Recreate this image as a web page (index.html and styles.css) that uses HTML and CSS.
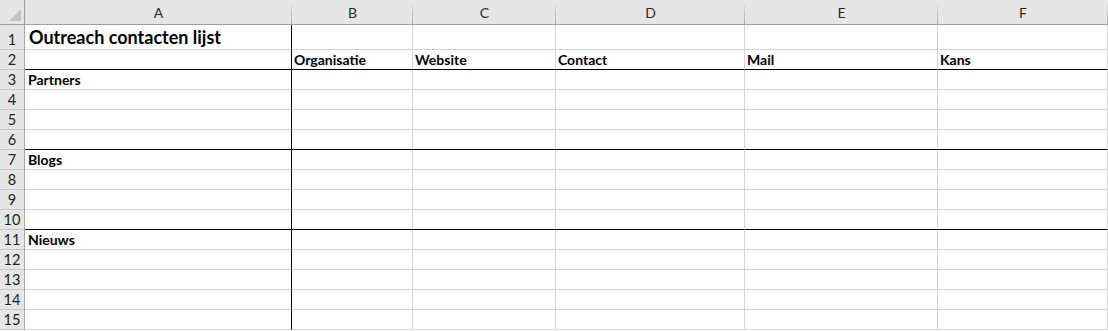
FILE: index.html
```html
<!DOCTYPE html>
<html lang="nl">
<head>
<meta charset="utf-8">
<title>Outreach contacten lijst</title>
<link rel="stylesheet" href="styles.css">
</head>
<body>
<div class="sheet">
  <div class="corner"></div>
  <div class="colhdr">A</div>
  <div class="colhdr">B</div>
  <div class="colhdr">C</div>
  <div class="colhdr">D</div>
  <div class="colhdr">E</div>
  <div class="colhdr">F</div>

  <div class="rowhdr">1</div>
  <div class="cell col-a title">Outreach contacten lijst</div>
  <div class="cell"></div><div class="cell"></div><div class="cell"></div><div class="cell"></div><div class="cell"></div>

  <div class="rowhdr">2</div>
  <div class="cell col-a sep"></div>
  <div class="cell sep b">Organisatie</div>
  <div class="cell sep b">Website</div>
  <div class="cell sep b">Contact</div>
  <div class="cell sep b">Mail</div>
  <div class="cell sep b">Kans</div>

  <div class="rowhdr">3</div>
  <div class="cell col-a b">Partners</div>
  <div class="cell"></div><div class="cell"></div><div class="cell"></div><div class="cell"></div><div class="cell"></div>

  <div class="rowhdr">4</div>
  <div class="cell col-a"></div>
  <div class="cell"></div><div class="cell"></div><div class="cell"></div><div class="cell"></div><div class="cell"></div>

  <div class="rowhdr">5</div>
  <div class="cell col-a"></div>
  <div class="cell"></div><div class="cell"></div><div class="cell"></div><div class="cell"></div><div class="cell"></div>

  <div class="rowhdr">6</div>
  <div class="cell col-a sep"></div>
  <div class="cell sep"></div><div class="cell sep"></div><div class="cell sep"></div><div class="cell sep"></div><div class="cell sep"></div>

  <div class="rowhdr">7</div>
  <div class="cell col-a b">Blogs</div>
  <div class="cell"></div><div class="cell"></div><div class="cell"></div><div class="cell"></div><div class="cell"></div>

  <div class="rowhdr">8</div>
  <div class="cell col-a"></div>
  <div class="cell"></div><div class="cell"></div><div class="cell"></div><div class="cell"></div><div class="cell"></div>

  <div class="rowhdr">9</div>
  <div class="cell col-a"></div>
  <div class="cell"></div><div class="cell"></div><div class="cell"></div><div class="cell"></div><div class="cell"></div>

  <div class="rowhdr">10</div>
  <div class="cell col-a sep"></div>
  <div class="cell sep"></div><div class="cell sep"></div><div class="cell sep"></div><div class="cell sep"></div><div class="cell sep"></div>

  <div class="rowhdr">11</div>
  <div class="cell col-a b">Nieuws</div>
  <div class="cell"></div><div class="cell"></div><div class="cell"></div><div class="cell"></div><div class="cell"></div>

  <div class="rowhdr">12</div>
  <div class="cell col-a"></div>
  <div class="cell"></div><div class="cell"></div><div class="cell"></div><div class="cell"></div><div class="cell"></div>

  <div class="rowhdr">13</div>
  <div class="cell col-a"></div>
  <div class="cell"></div><div class="cell"></div><div class="cell"></div><div class="cell"></div><div class="cell"></div>

  <div class="rowhdr">14</div>
  <div class="cell col-a"></div>
  <div class="cell"></div><div class="cell"></div><div class="cell"></div><div class="cell"></div><div class="cell"></div>

  <div class="rowhdr">15</div>
  <div class="cell col-a"></div>
  <div class="cell"></div><div class="cell"></div><div class="cell"></div><div class="cell"></div><div class="cell"></div>
</div>
</body>
</html>
```
FILE: styles.css
```css
html, body {
  margin: 0;
  padding: 0;
  background: #ffffff;
}

.sheet {
  display: grid;
  grid-template-columns: 25px 267px 121px 143px 189px 193px 170px;
  grid-template-rows: 25px 25px repeat(14, 20px);
  font-family: Lato, "Liberation Sans", sans-serif;
  font-size: 14px;
  color: #000;
}

/* top-left select-all box with its triangle */
.corner {
  position: relative;
  background: #e6e6e6;
  border-right: 1px solid #9f9f9f;
  border-bottom: 1px solid #9f9f9f;
  box-sizing: border-box;
}
.corner::after {
  content: "";
  position: absolute;
  left: 9px;
  top: 9px;
  width: 12px;
  height: 12px;
  background: #c3c3c3;
  clip-path: polygon(100% 0, 100% 100%, 0 100%);
}

/* column letters */
.colhdr {
  position: relative;
  background: #e6e6e6;
  border-bottom: 1px solid #9f9f9f;
  box-sizing: border-box;
  display: flex;
  align-items: center;
  justify-content: center;
  padding-top: 1px;
  color: #2b2b2b;
  font-size: 14px;
}
.colhdr::after {
  content: "";
  position: absolute;
  right: 0;
  top: 5px;
  bottom: 0;
  width: 1px;
  background: linear-gradient(#dcdcdc, #a9a9a9);
}

/* row numbers */
.rowhdr {
  background: #e6e6e6;
  border-right: 1px solid #a8a8a8;
  border-bottom: 1px solid #c8c8c8;
  box-sizing: border-box;
  display: flex;
  align-items: flex-end;
  justify-content: center;
  padding-bottom: 1px;
  color: #222;
  font-size: 14.5px;
  line-height: 17px;
}

/* worksheet cells, text sits on the bottom edge */
.cell {
  border-right: 1px solid #d4d4d4;
  border-bottom: 1px solid #d4d4d4;
  box-sizing: border-box;
  display: flex;
  align-items: flex-end;
  padding: 0 2px 1px 2px;
  white-space: nowrap;
  overflow: hidden;
  line-height: 17px;
}

.col-a {
  border-right-color: #000;
}

.sep {
  border-bottom-color: #000;
}

.b {
  font-weight: 700;
}

.col-a.b {
  padding-left: 3px;
}

.title {
  font-size: 18px;
  font-weight: 700;
  line-height: 22px;
  padding-left: 4px;
}
```
